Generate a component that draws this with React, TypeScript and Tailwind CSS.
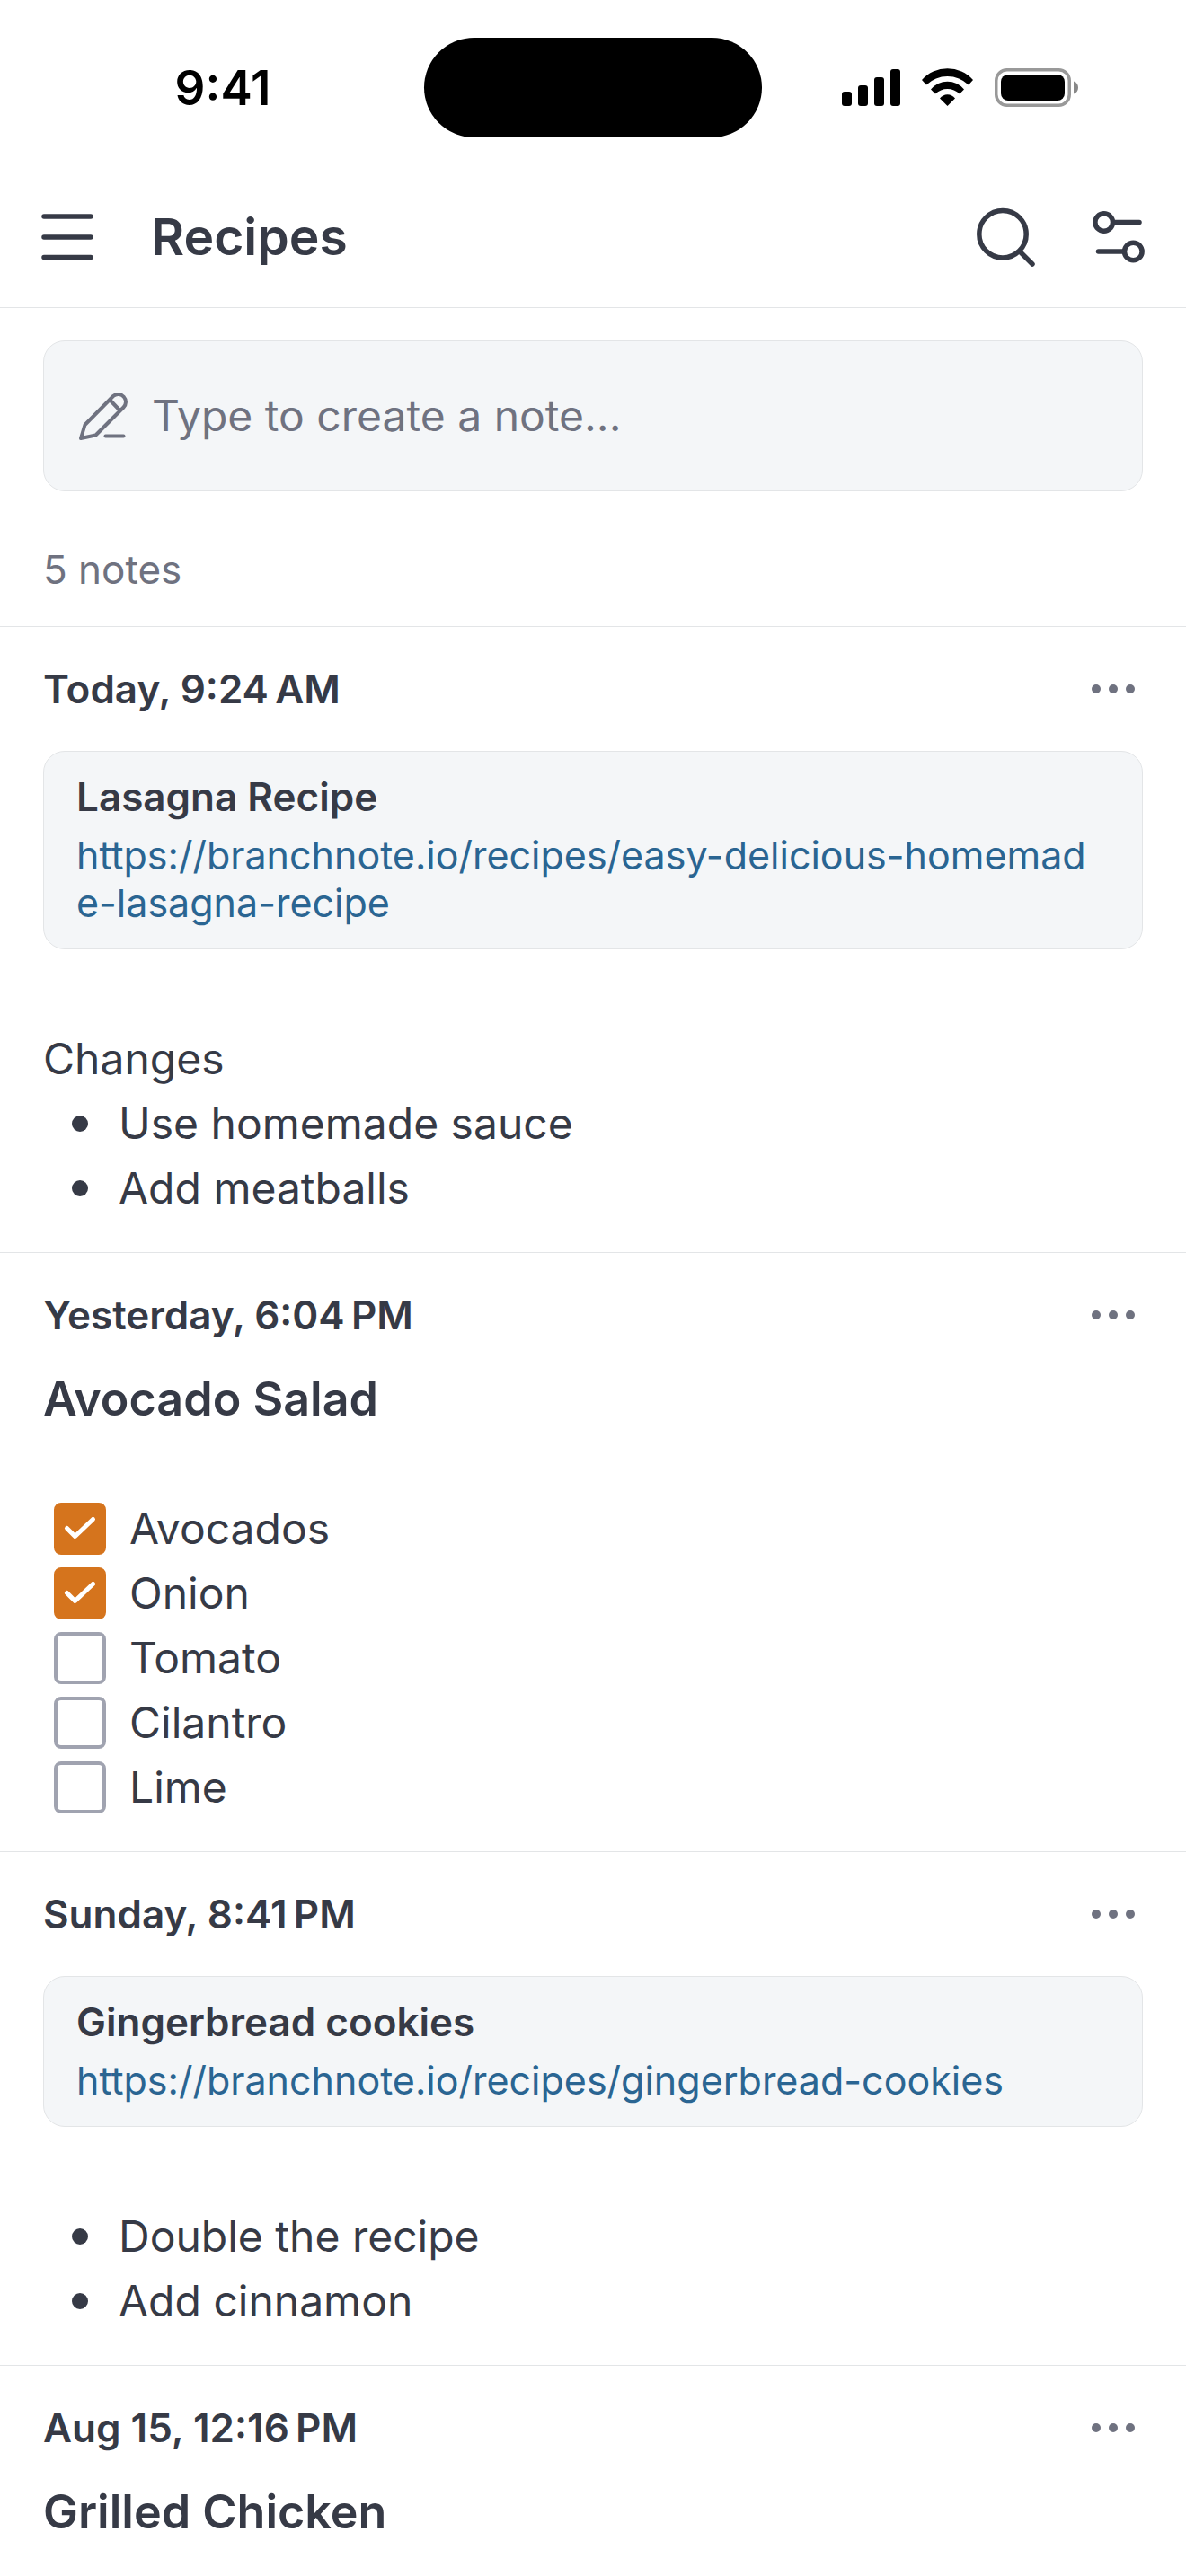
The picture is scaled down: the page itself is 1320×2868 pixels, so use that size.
import React from 'react';

interface CheckItemProps {
  id: string;
  label: string;
  defaultChecked?: boolean;
}

const SignalIcon = () => (
  <svg width="65" height="43" viewBox="0 0 65 43" fill="currentColor" aria-hidden="true">
    <rect x="0" y="26" width="11" height="16" rx="3" />
    <rect x="18" y="19" width="11" height="23" rx="3" />
    <rect x="36" y="10" width="11" height="32" rx="3" />
    <rect x="54" y="1" width="11" height="41" rx="3" />
  </svg>
);

const WifiIcon = () => (
  <svg width="57" height="43" viewBox="0 0 57 43" fill="currentColor" aria-hidden="true">
    <path d="M0 13A38 38 0 0 1 57 13L52 18.5A34 34 0 0 0 5 18.5Z" />
    <path d="M10 23.5A23.8 23.8 0 0 1 47 23.5L42 28.5A19.3 19.3 0 0 0 15 28.5Z" />
    <path d="M20 33.5A10.8 10.8 0 0 1 37 33.5L28.5 42Z" />
  </svg>
);

const BatteryIcon = () => (
  <svg width="93" height="43" viewBox="0 0 93 43" fill="none" aria-hidden="true">
    <rect x="1.75" y="1.75" width="81.5" height="39.5" rx="12" stroke="#999" strokeWidth="3.5" />
    <rect x="7" y="7" width="71" height="29" rx="8" fill="#000" />
    <path d="M88 14.5C91 15.5 93 18 93 21.5S91 27.5 88 28.5Z" fill="#888" />
  </svg>
);

const MenuIcon = () => (
  <svg width="60" height="60" viewBox="0 0 60 60" fill="none" stroke="currentColor" strokeWidth="5.5" strokeLinecap="round" aria-hidden="true">
    <path d="M5 7H57M5 30H57M5 52.5H57" />
  </svg>
);

const SearchIcon = () => (
  <svg width="66" height="66" viewBox="0 0 66 66" fill="none" stroke="currentColor" strokeWidth="5.5" strokeLinecap="round" aria-hidden="true">
    <circle cx="30" cy="29.7" r="26.2" />
    <path d="M49 49L63 63" />
  </svg>
);

const FilterIcon = () => (
  <svg width="60" height="60" viewBox="0 0 60 60" fill="none" stroke="currentColor" strokeWidth="5.5" strokeLinecap="round" aria-hidden="true">
    <circle cx="12.7" cy="13.5" r="9.8" />
    <path d="M23 13.5H52" />
    <circle cx="45.3" cy="46" r="9.8" />
    <path d="M6.5 46H35" />
  </svg>
);

const PencilIcon = () => (
  <svg width="60" height="56" viewBox="0 0 60 56" fill="none" stroke="currentColor" strokeWidth="4" strokeLinecap="round" strokeLinejoin="round" aria-hidden="true">
    <path d="M5 53L9.5 38L41 6A8.5 8.5 0 0 1 52.5 18.5L21.5 49.5Z" />
    <path d="M37.5 10.5L47.5 21" />
    <path d="M32.5 50.5H52.5" />
  </svg>
);

const StatusBar = () => (
  <div className="grid grid-cols-[1fr_376px_1fr] items-center pt-[42px] text-black">
    <span className="pl-6 text-center text-[53px] leading-16 font-semibold">9:41</span>
    <div className="h-[111px] rounded-full bg-black"></div>
    <div className="flex justify-center gap-6 pr-8">
      <SignalIcon />
      <WifiIcon />
      <BatteryIcon />
    </div>
  </div>
);

const NoteHeader = ({ date }: { date: string }) => (
  <div className="flex items-center justify-between">
    <h2 className="text-[44px] leading-[54px] font-semibold">{date}</h2>
    <button type="button" aria-label={`Options for ${date}`} className="px-2 text-[#6f7280]">
      <svg width="50" height="12" viewBox="0 0 50 12" fill="currentColor" aria-hidden="true">
        <circle cx="6" cy="6" r="5" />
        <circle cx="25" cy="6" r="5" />
        <circle cx="44" cy="6" r="5" />
      </svg>
    </button>
  </div>
);

const Note = ({ date, children }: { date: string; children: React.ReactNode }) => (
  <article className="border-t border-[#e3e5e7] px-12 pt-[42px] pb-[35px]">
    <NoteHeader date={date} />
    {children}
  </article>
);

const LinkCard = ({ title, url }: { title: string; url: string }) => (
  <div className="mt-[42px] mb-[86px] rounded-3xl border border-[#e3e5e7] bg-[#f4f6f8] py-6 pr-14 pl-9 leading-[53px]">
    <h3 className="text-[44px] font-semibold">{title}</h3>
    <a href={url} className="mt-3 block text-[43px] break-all text-[#2a6592]">{url}</a>
  </div>
);

const NoteTitle = ({ children }: { children: React.ReactNode }) => (
  <h3 className="mt-[31px] text-[52px] leading-[72px] font-semibold">{children}</h3>
);

const BulletList = ({ items }: { items: string[] }) => (
  <ul>
    {items.map((item) => (
      <li key={item} className="flex items-center gap-[34px] pl-8">
        <span className="size-[18px] rounded-full bg-[#363a46]"></span>
        {item}
      </li>
    ))}
  </ul>
);

const CheckItem = ({ id, label, defaultChecked }: CheckItemProps) => (
  <li className="flex items-center gap-[26px] pl-3">
    <span className="grid">
      <input
        id={id}
        type="checkbox"
        defaultChecked={defaultChecked}
        className="peer col-start-1 row-start-1 size-[58px] appearance-none rounded-lg border-4 border-[#a0a3b0] checked:border-[#d5741d] checked:bg-[#d5741d]"
      />
      <svg width="58" height="58" viewBox="0 0 58 58" fill="none" className="pointer-events-none invisible col-start-1 row-start-1 stroke-white stroke-5 peer-checked:visible" strokeLinecap="round" strokeLinejoin="round" aria-hidden="true">
        <path d="M14.5 28.5L23.5 37.5L43.5 18.5" />
      </svg>
    </span>
    <label htmlFor={id}>{label}</label>
  </li>
);

const App: React.FC = () => {
  return (
    <div className="min-h-screen bg-white font-['Inter',sans-serif] text-[48px] leading-[72px] text-[#363a46]">
      <StatusBar />

      <header className="flex items-center border-b border-[#e3e5e7] px-11 pt-[75px] pb-[42px]">
        <button type="button" aria-label="Menu">
          <MenuIcon />
        </button>
        <h1 className="ml-16 flex-1 text-[57px] leading-[72px] font-semibold">Recipes</h1>
        <button type="button" aria-label="Search" className="mr-16">
          <SearchIcon />
        </button>
        <button type="button" aria-label="Filter">
          <FilterIcon />
        </button>
      </header>

      <main>
        <div className="px-12 pt-9">
          <div className="flex h-[168px] items-center gap-6 rounded-3xl border border-[#e3e5e7] bg-[#f4f6f8] px-9 text-[#6f7280]">
            <PencilIcon />
            <input
              type="text"
              aria-label="New note"
              placeholder="Type to create a note..."
              className="min-w-0 flex-1 bg-transparent outline-none placeholder:text-[#6f7280]"
            />
          </div>
          <p className="pt-15 pb-9 text-[44px] leading-[54px] text-[#6f7280]">5 notes</p>
        </div>

        <Note date={'Today, 9:24\u202fAM'}>
          <LinkCard title="Lasagna Recipe" url="https://branchnote.io/recipes/easy-delicious-homemade-lasagna-recipe" />
          <p>Changes</p>
          <BulletList items={['Use homemade sauce', 'Add meatballs']} />
        </Note>

        <Note date={'Yesterday, 6:04\u202fPM'}>
          <NoteTitle>Avocado Salad</NoteTitle>
          <ul className="mt-[72px]">
            <CheckItem id="avocados" label="Avocados" defaultChecked />
            <CheckItem id="onion" label="Onion" defaultChecked />
            <CheckItem id="tomato" label="Tomato" />
            <CheckItem id="cilantro" label="Cilantro" />
            <CheckItem id="lime" label="Lime" />
          </ul>
        </Note>

        <Note date={'Sunday, 8:41\u202fPM'}>
          <LinkCard title="Gingerbread cookies" url="https://branchnote.io/recipes/gingerbread-cookies" />
          <BulletList items={['Double the recipe', 'Add cinnamon']} />
        </Note>

        <Note date={'Aug 15, 12:16\u202fPM'}>
          <NoteTitle>Grilled Chicken</NoteTitle>
        </Note>
      </main>
    </div>
  );
};

export default App;
